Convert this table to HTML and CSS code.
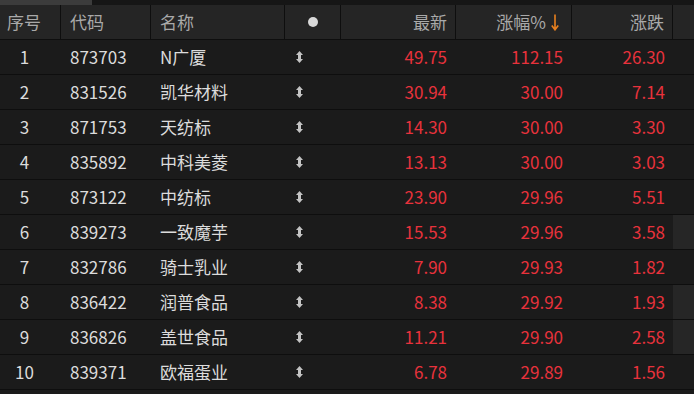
FILE: index.html
```html
<!DOCTYPE html>
<html lang="zh">
<head>
<meta charset="utf-8">
<link rel="stylesheet" href="styles.css">
</head>
<body>
<div class="topbar"><div class="tab"></div></div>
<div class="grid">
  <div class="row head">
    <div class="c c-idx">序号</div>
    <div class="c c-code">代码</div>
    <div class="c c-name">名称</div>
    <div class="c c-dot"><span class="dot"></span></div>
    <div class="c c-num">最新</div>
    <div class="c c-num c-pct">涨幅%<svg class="sort" width="8" height="17" viewBox="0 0 8 17"><path d="M4 0.5 V15.5 M0.8 11.5 L4 15.8 L7.2 11.5" fill="none" stroke="#e8801f" stroke-width="1.6"/></svg></div>
    <div class="c c-num c-chg">涨跌</div>
    <div class="c c-end"></div>
  </div>
  <div class="row"><div class="c c-idx">1</div><div class="c c-code">873703</div><div class="c c-name">N广厦</div><div class="c c-dot"><svg class="ud" width="7" height="12" viewBox="0 0 7 12"><path d="M3.5 0 L7 4 L5 4 L5 8 L7 8 L3.5 12 L0 8 L2 8 L2 4 L0 4 Z"/></svg></div><div class="c c-num up">49.75</div><div class="c c-num up">112.15</div><div class="c c-num c-chg up">26.30</div><div class="c c-end"></div></div>
  <div class="row"><div class="c c-idx">2</div><div class="c c-code">831526</div><div class="c c-name">凯华材料</div><div class="c c-dot"><svg class="ud" width="7" height="12" viewBox="0 0 7 12"><path d="M3.5 0 L7 4 L5 4 L5 8 L7 8 L3.5 12 L0 8 L2 8 L2 4 L0 4 Z"/></svg></div><div class="c c-num up">30.94</div><div class="c c-num up">30.00</div><div class="c c-num c-chg up">7.14</div><div class="c c-end"></div></div>
  <div class="row"><div class="c c-idx">3</div><div class="c c-code">871753</div><div class="c c-name">天纺标</div><div class="c c-dot"><svg class="ud" width="7" height="12" viewBox="0 0 7 12"><path d="M3.5 0 L7 4 L5 4 L5 8 L7 8 L3.5 12 L0 8 L2 8 L2 4 L0 4 Z"/></svg></div><div class="c c-num up">14.30</div><div class="c c-num up">30.00</div><div class="c c-num c-chg up">3.30</div><div class="c c-end"></div></div>
  <div class="row"><div class="c c-idx">4</div><div class="c c-code">835892</div><div class="c c-name">中科美菱</div><div class="c c-dot"><svg class="ud" width="7" height="12" viewBox="0 0 7 12"><path d="M3.5 0 L7 4 L5 4 L5 8 L7 8 L3.5 12 L0 8 L2 8 L2 4 L0 4 Z"/></svg></div><div class="c c-num up">13.13</div><div class="c c-num up">30.00</div><div class="c c-num c-chg up">3.03</div><div class="c c-end"></div></div>
  <div class="row"><div class="c c-idx">5</div><div class="c c-code">873122</div><div class="c c-name">中纺标</div><div class="c c-dot"><svg class="ud" width="7" height="12" viewBox="0 0 7 12"><path d="M3.5 0 L7 4 L5 4 L5 8 L7 8 L3.5 12 L0 8 L2 8 L2 4 L0 4 Z"/></svg></div><div class="c c-num up">23.90</div><div class="c c-num up">29.96</div><div class="c c-num c-chg up">5.51</div><div class="c c-end"></div></div>
  <div class="row"><div class="c c-idx">6</div><div class="c c-code">839273</div><div class="c c-name">一致魔芋</div><div class="c c-dot"><svg class="ud" width="7" height="12" viewBox="0 0 7 12"><path d="M3.5 0 L7 4 L5 4 L5 8 L7 8 L3.5 12 L0 8 L2 8 L2 4 L0 4 Z"/></svg></div><div class="c c-num up">15.53</div><div class="c c-num up">29.96</div><div class="c c-num c-chg up">3.58</div><div class="c c-end lit"></div></div>
  <div class="row"><div class="c c-idx">7</div><div class="c c-code">832786</div><div class="c c-name">骑士乳业</div><div class="c c-dot"><svg class="ud" width="7" height="12" viewBox="0 0 7 12"><path d="M3.5 0 L7 4 L5 4 L5 8 L7 8 L3.5 12 L0 8 L2 8 L2 4 L0 4 Z"/></svg></div><div class="c c-num up">7.90</div><div class="c c-num up">29.93</div><div class="c c-num c-chg up">1.82</div><div class="c c-end"></div></div>
  <div class="row"><div class="c c-idx">8</div><div class="c c-code">836422</div><div class="c c-name">润普食品</div><div class="c c-dot"><svg class="ud" width="7" height="12" viewBox="0 0 7 12"><path d="M3.5 0 L7 4 L5 4 L5 8 L7 8 L3.5 12 L0 8 L2 8 L2 4 L0 4 Z"/></svg></div><div class="c c-num up">8.38</div><div class="c c-num up">29.92</div><div class="c c-num c-chg up">1.93</div><div class="c c-end lit"></div></div>
  <div class="row"><div class="c c-idx">9</div><div class="c c-code">836826</div><div class="c c-name">盖世食品</div><div class="c c-dot"><svg class="ud" width="7" height="12" viewBox="0 0 7 12"><path d="M3.5 0 L7 4 L5 4 L5 8 L7 8 L3.5 12 L0 8 L2 8 L2 4 L0 4 Z"/></svg></div><div class="c c-num up">11.21</div><div class="c c-num up">29.90</div><div class="c c-num c-chg up">2.58</div><div class="c c-end lit"></div></div>
  <div class="row"><div class="c c-idx">10</div><div class="c c-code">839371</div><div class="c c-name">欧福蛋业</div><div class="c c-dot"><svg class="ud" width="7" height="12" viewBox="0 0 7 12"><path d="M3.5 0 L7 4 L5 4 L5 8 L7 8 L3.5 12 L0 8 L2 8 L2 4 L0 4 Z"/></svg></div><div class="c c-num up">6.78</div><div class="c c-num up">29.89</div><div class="c c-num c-chg up">1.56</div><div class="c c-end"></div></div>
</div>
</body>
</html>
```
FILE: styles.css
```css
* { box-sizing: border-box; }
html, body {
  margin: 0;
  padding: 0;
  background: #1b1b1b;
  width: 694px;
  height: 394px;
  overflow: hidden;
  font-family: "Noto Sans CJK SC", "Noto Sans", sans-serif;
}
.topbar {
  height: 5px;
  background: #161616;
}
.tab {
  width: 92px;
  height: 5px;
  background: #3c3c3c;
}
.grid {
  display: flex;
  flex-direction: column;
}
.row {
  display: grid;
  grid-template-columns: 61px 90px 134px 56px 115px 116px 101px 21px;
  height: 35px;
  border-bottom: 1px solid #0e0e0e;
  background: #1b1b1b;
  color: #dcdcdc;
  font-size: 17px;
}
.row.head {
  background: #252525;
  color: #a9a9a9;
}
.row.head .c {
  border-right: 1px solid #0e0e0e;
}
.row.head .c-end { border-right: none; }
.c {
  display: flex;
  align-items: center;
  white-space: nowrap;
  overflow: hidden;
  padding-bottom: 2px;
}
.c-idx { justify-content: center; padding-right: 12px; }
.c-code { padding-left: 9px; }
.c-name { padding-left: 9px; }
.c-dot { justify-content: flex-start; padding-left: 11px; padding-bottom: 0; }
.head .c-dot { justify-content: center; padding-left: 0; }
.c-num { justify-content: flex-end; padding-right: 9px; }
.c-pct { padding-right: 10px; }
.c-chg { padding-right: 8px; }
.head .c-num { padding-right: 8px; }
.head .c-pct { padding-right: 12px; }
.dot {
  width: 10px;
  height: 10px;
  border-radius: 50%;
  background: #d9d9d9;
}
.sort { margin-left: 5px; margin-top: 2px; }
.ud { fill: #c4c4c4; }
.up { color: #e8323c; }
.c-end.lit { background: #262626; }
```
